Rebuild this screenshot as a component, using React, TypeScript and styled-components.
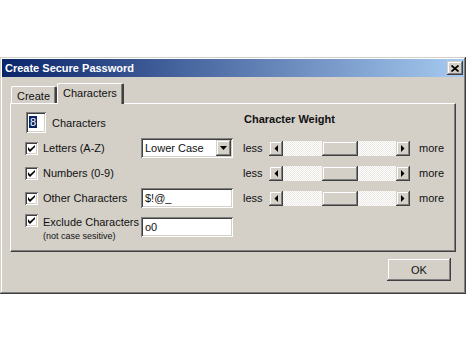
import React from 'react'
import styled, { createGlobalStyle } from 'styled-components'

const GlobalStyle = createGlobalStyle`
  html, body {
    margin: 0;
    padding: 0;
    background: #ffffff;
  }
  body {
    font-family: 'Liberation Sans', Arial, sans-serif;
    font-size: 11px;
    color: #111;
  }
`

const raised = `
  box-shadow: inset -1px -1px #404040, inset 1px 1px #d4d0c8,
    inset -2px -2px #808080, inset 2px 2px #ffffff;
`

const sunken = `
  box-shadow: inset 1px 1px #808080, inset -1px -1px #ffffff,
    inset 2px 2px #404040, inset -2px -2px #d4d0c8;
`

const Page = styled.div`
  width: 468px;
  height: 351px;
  padding-top: 57px;
  box-sizing: border-box;
`

const Window = styled.div`
  width: 466px;
  height: 237px;
  box-sizing: border-box;
  padding: 2px;
  background: #d4d0c8;
  ${raised}
  display: flex;
  flex-direction: column;
`

const TitleBar = styled.div`
  height: 18px;
  display: flex;
  align-items: center;
  justify-content: space-between;
  padding: 0 1px 0 3px;
  background: linear-gradient(to right, #0a246a, #a6caf0);
`

const TitleText = styled.span`
  color: #fff;
  font-weight: bold;
  font-size: 11px;
`

const CloseButton = styled.button`
  width: 16px;
  height: 14px;
  padding: 0;
  border: none;
  background: #d4d0c8;
  ${raised}
  display: flex;
  align-items: center;
  justify-content: center;
`

const Body = styled.div`
  flex: 1;
  display: flex;
  flex-direction: column;
  padding: 6px 8px 0 8px;
`

const TabRow = styled.div`
  display: flex;
  align-items: flex-end;
  height: 20px;
  padding-left: 1px;
`

const Tab = styled.div<{ active?: boolean }>`
  position: relative;
  z-index: ${(p) => (p.active ? 2 : 1)};
  box-sizing: border-box;
  height: ${(p) => (p.active ? '21px' : '17px')};
  margin-bottom: ${(p) => (p.active ? '-1px' : '0')};
  padding: ${(p) => (p.active ? '3px 5px 0 5px' : '3px 5px 0 5px')};
  background: #d4d0c8;
  border-top: 1px solid #fff;
  border-left: 1px solid #fff;
  border-right: 2px solid #404040;
  border-top-left-radius: 2px;
  border-top-right-radius: 2px;
  box-shadow: inset -1px 0 #808080;
`

const Panel = styled.div`
  height: 149px;
  box-sizing: border-box;
  border-top: 1px solid #fff;
  border-left: 1px solid #fff;
  border-right: 1px solid #404040;
  border-bottom: 1px solid #404040;
  box-shadow: inset -1px -1px #808080;
  padding: 8px 0 0 14px;
`

const Grid = styled.div`
  display: grid;
  grid-template-columns: 116px 92px 10px 26px 141px auto;
  grid-template-rows: 21px 20px 20px 20px auto;
  row-gap: 5px;
  align-items: center;
`

const CountCell = styled.div`
  grid-column: 1 / 3;
  display: flex;
  align-items: center;
  gap: 6px;
  padding-left: 1px;
`

const CountBox = styled.div`
  width: 20px;
  height: 21px;
  box-sizing: border-box;
  background: #fff;
  ${sunken}
  padding: 4px 0 0 3px;
`

const Selected = styled.span`
  background: #0a246a;
  color: #fff;
  padding: 0 1px;
`

const Heading = styled.div`
  grid-column: 4 / 7;
  font-weight: bold;
  align-self: start;
  padding: 1px 0 0 1px;
`

const CheckCell = styled.div<{ top?: boolean }>`
  grid-column: 1;
  display: flex;
  align-items: ${(p) => (p.top ? 'flex-start' : 'center')};
  gap: 5px;
  padding-top: ${(p) => (p.top ? '1px' : '0')};
`

const Box = styled.div`
  width: 13px;
  height: 13px;
  flex: none;
  box-sizing: border-box;
  background: #fff;
  ${sunken}
  display: flex;
  align-items: center;
  justify-content: center;
`

const LabelStack = styled.div`
  display: flex;
  flex-direction: column;
  padding-top: 2px;
`

const Note = styled.span`
  font-size: 9px;
  margin-top: 3px;
`

const Field = styled.div`
  grid-column: 2;
  height: 20px;
  box-sizing: border-box;
  background: #fff;
  ${sunken}
  display: flex;
  align-items: center;
  padding-left: 4px;
`

const SelectBox = styled(Field)`
  padding-right: 2px;
  justify-content: space-between;
`

const DropButton = styled.div`
  width: 15px;
  height: 16px;
  background: #d4d0c8;
  ${raised}
  display: flex;
  align-items: center;
  justify-content: center;
`

const Less = styled.span`
  grid-column: 4;
`

const Scroll = styled.div`
  grid-column: 5;
  height: 15px;
  display: flex;
`

const ArrowButton = styled.div`
  width: 14px;
  height: 15px;
  flex: none;
  box-sizing: border-box;
  background: #d4d0c8;
  ${raised}
  display: flex;
  align-items: center;
  justify-content: center;
`

const Track = styled.div`
  flex: 1;
  display: flex;
  justify-content: center;
  background-color: #f4f2ef;
  background-image: repeating-conic-gradient(#ffffff 0 25%, #ebe8e3 0 50%);
  background-size: 2px 2px;
`

const Thumb = styled.div`
  width: 36px;
  background: #d4d0c8;
  ${raised}
`

const More = styled.span`
  grid-column: 6;
  padding-left: 9px;
`

const Footer = styled.div`
  display: flex;
  justify-content: flex-end;
  padding: 6px 5px 0 0;
`

const OkButton = styled.button`
  width: 64px;
  height: 23px;
  border: none;
  background: #d4d0c8;
  ${raised}
  font-family: inherit;
  font-size: 11px;
  color: #111;
`

const Check = () => (
  <svg width="7" height="7" viewBox="0 0 7 7">
    <path d="M0 2v3l2 2 5-5V0L2 4.5z" fill="#000" />
  </svg>
)

const Cross = () => (
  <svg width="8" height="7" viewBox="0 0 8 7">
    <path d="M0.5 0.5l7 6M7.5 0.5l-7 6" stroke="#000" strokeWidth="1.7" />
  </svg>
)

const Arrow = ({ dir }: { dir: 'left' | 'right' | 'down' }) => {
  const d =
    dir === 'left' ? 'M4 0v7L0.5 3.5z' : dir === 'right' ? 'M0 0v7l3.5-3.5z' : 'M0 0h7L3.5 4z'
  return (
    <svg
      width={dir === 'down' ? 7 : 4}
      height={dir === 'down' ? 4 : 7}
      viewBox={dir === 'down' ? '0 0 7 4' : '0 0 4 7'}
    >
      <path d={d} fill="#000" />
    </svg>
  )
}

const Slider = () => (
  <>
    <Less>less</Less>
    <Scroll>
      <ArrowButton>
        <Arrow dir="left" />
      </ArrowButton>
      <Track>
        <Thumb />
      </Track>
      <ArrowButton>
        <Arrow dir="right" />
      </ArrowButton>
    </Scroll>
    <More>more</More>
  </>
)

const App = () => {
  return (
    <Page>
      <GlobalStyle />
      <Window>
        <TitleBar>
          <TitleText>Create Secure Password</TitleText>
          <CloseButton type="button">
            <Cross />
          </CloseButton>
        </TitleBar>
        <Body>
          <TabRow>
            <Tab>Create</Tab>
            <Tab active>Characters</Tab>
          </TabRow>
          <Panel>
            <Grid>
              <CountCell>
                <CountBox>
                  <Selected>8</Selected>
                </CountBox>
                <span>Characters</span>
              </CountCell>
              <Heading>Character Weight</Heading>

              <CheckCell>
                <Box><Check /></Box>
                <span>Letters (A-Z)</span>
              </CheckCell>
              <SelectBox>
                <span>Lower Case</span>
                <DropButton>
                  <Arrow dir="down" />
                </DropButton>
              </SelectBox>
              <Slider />

              <CheckCell>
                <Box><Check /></Box>
                <span>Numbers (0-9)</span>
              </CheckCell>
              <Slider />

              <CheckCell>
                <Box><Check /></Box>
                <span>Other Characters</span>
              </CheckCell>
              <Field>$!@_</Field>
              <Slider />

              <CheckCell top>
                <Box><Check /></Box>
                <LabelStack>
                  <span>Exclude Characters</span>
                  <Note>(not case sesitive)</Note>
                </LabelStack>
              </CheckCell>
              <Field>o0</Field>
            </Grid>
          </Panel>
          <Footer>
            <OkButton type="button">OK</OkButton>
          </Footer>
        </Body>
      </Window>
    </Page>
  )
}

export default App
